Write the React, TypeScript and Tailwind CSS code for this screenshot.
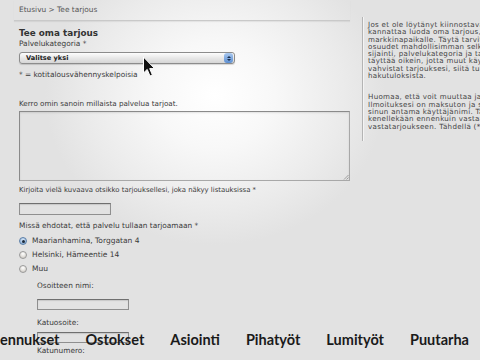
import React from "react";

const sidebarLines = [
  "Jos et ole löytänyt kiinnostavaa palvelua, sinun",
  "kannattaa luoda oma tarjous, jonka voit julkaista",
  "markkinapaikalle. Täytä tarvittavat tiedot ja",
  "osuudet mahdollisimman selkeästi. Tarjouksen",
  "sijainti, palvelukategoria ja tarjouksen otsikko",
  "täyttää oikein, jotta muut käyttäjät löytävät sen. Kun",
  "vahvistat tarjouksesi, siitä tulee näkyvä",
  "hakutuloksista.",
];

const sidebarLines2 = [
  "Huomaa, että voit muuttaa ja poistaa tarjouksesi.",
  "Ilmoituksesi on maksuton ja sen yhteydessä näkyy",
  "sinun antama käyttäjänimi. Tarjouksesi ei näy",
  "kenellekään ennenkuin vastaat",
  "vastatarjoukseen. Tähdellä (*) merkityt kentät",
];

const captions = ["ennukset", "Ostokset", "Asiointi", "Pihatyöt", "Lumityöt", "Puutarha"];

const Radio: React.FC<{ checked?: boolean; label: string }> = ({ checked, label }) => (
  <div className="flex items-center h-[14px]">
    <span
      className={`ml-[19px] w-[8px] h-[8px] rounded-full border flex items-center justify-center ${
        checked
          ? "border-[#5b7fa8] bg-[radial-gradient(circle_at_50%_30%,#d6e6f7,#7ea4cf)]"
          : "border-[#9a9a9a] bg-[radial-gradient(circle_at_50%_30%,#ffffff,#c9c4bc)]"
      }`}
    >
      {checked && <span className="w-[3px] h-[3px] rounded-full bg-[#1d2a3a]" />}
    </span>
    <span className="ml-[5px] text-[7.5px] leading-[8px] text-[#3a3a3a] whitespace-nowrap">{label}</span>
  </div>
);

const TextInput: React.FC<{ className?: string }> = ({ className = "" }) => (
  <div
    className={`border border-[#8f8f8f] border-t-[#6f6f6f] shadow-[inset_0_1px_1px_rgba(0,0,0,0.12)] ${className}`}
  />
);

const Cursor: React.FC = () => (
  <svg
    className="absolute left-[142px] top-[56px]"
    width="14"
    height="22"
    viewBox="0 0 14 22"
  >
    <path
      d="M1.5 1 L1.5 17 L5.2 13.4 L8 20 L10.4 19 L7.7 12.6 L12.6 12.6 Z"
      fill="#111"
      stroke="#fff"
      strokeWidth="1"
      strokeLinejoin="round"
    />
  </svg>
);

export default function App() {
  return (
    <div
      className="relative w-[480px] h-[360px] overflow-hidden text-[#3a3a3a] bg-[#e2e2e2] bg-[radial-gradient(ellipse_170px_150px_at_215px_95px,#ffffff_0%,#f8f8f8_35%,#ebebeb_75%,#e2e2e2_100%)]"
      style={{ fontFamily: '"DejaVu Sans", Verdana, sans-serif' }}
    >
      <div className="flex">
        {/* main form column */}
        <div className="w-[350px] shrink-0">
          <div className="ml-[14px] h-[21px] border-b border-[#c9c9c9] shadow-[0_1px_1px_rgba(0,0,0,0.06)]">
            <div className="pt-[6px] pl-[5px] text-[7.4px] leading-[8px] text-[#555] whitespace-nowrap">
              Etusivu &gt; Tee tarjous
            </div>
          </div>

          <div className="pl-[19px]">
            <div className="mt-[7px] text-[8.8px] leading-[10px] font-bold text-[#333]">
              Tee oma tarjous
            </div>
            <div className="mt-[2px] text-[7.4px] leading-[8px]">Palvelukategoria *</div>

            <div className="mt-[4px] w-[216px] h-[12px] rounded-[3px] border border-[#8c8c8c] bg-[linear-gradient(#fdfdfd,#e6e6e6_55%,#d6d6d6)] flex items-center justify-between shadow-[0_1px_1px_rgba(0,0,0,0.15)]">
              <span className="ml-[6px] text-[6.6px] leading-[8px] font-bold text-[#222]">
                Valitse yksi
              </span>
              <span className="mr-[1px] w-[9px] h-[10px] rounded-[3px] bg-[linear-gradient(#a9c8ef,#5d8fd2)] flex flex-col items-center justify-center gap-[1px]">
                <span className="w-0 h-0 border-l-[2px] border-r-[2px] border-b-[2px] border-l-transparent border-r-transparent border-b-[#1b2f4d]" />
                <span className="w-0 h-0 border-l-[2px] border-r-[2px] border-t-[2px] border-l-transparent border-r-transparent border-t-[#1b2f4d]" />
              </span>
            </div>

            <div className="mt-[7px] text-[7.4px] leading-[8px]">* = kotitalousvähennyskelpoisia</div>

            <div className="mt-[21px] text-[7.2px] leading-[8px] whitespace-nowrap">
              Kerro omin sanoin millaista palvelua tarjoat.
            </div>
            <div className="relative mt-[3px] w-[331px] h-[70px] border border-[#8a8a8a] border-r-[#a8a8a8] border-b-[#a8a8a8] shadow-[inset_0_1px_2px_rgba(0,0,0,0.1)]">
              <svg className="absolute right-[0px] bottom-[0px]" width="6" height="6" viewBox="0 0 6 6">
                <path d="M5.5 1 L1 5.5 M5.5 3.5 L3.5 5.5" stroke="#8a8a8a" strokeWidth="0.8" />
              </svg>
            </div>

            <div className="mt-[5px] text-[6.9px] leading-[8px] whitespace-nowrap">
              Kirjoita vielä kuvaava otsikko tarjouksellesi, joka näkyy listauksissa *
            </div>
            <TextInput className="mt-[9px] w-[92px] h-[12px]" />

            <div className="mt-[7px] text-[7.4px] leading-[8px] whitespace-nowrap">
              Missä ehdotat, että palvelu tullaan tarjoamaan *
            </div>
          </div>

          <div className="mt-[4px]">
            <Radio checked label="Maarianhamina, Torggatan 4" />
            <Radio label="Helsinki, Hämeentie 14" />
            <Radio label="Muu" />
          </div>

          <div className="pl-[37px]">
            <div className="mt-[6px] text-[7.4px] leading-[8px]">Osoitteen nimi:</div>
            <TextInput className="mt-[9px] w-[92px] h-[11px]" />
            <div className="mt-[9px] text-[7.4px] leading-[8px]">Katuosoite:</div>
            <TextInput className="mt-[5px] w-[92px] h-[11px]" />
            <div className="mt-[4px] text-[7.4px] leading-[8px]">Katunumero:</div>
          </div>
        </div>

        {/* info sidebar */}
        <div className="ml-[12px] mt-[17px] h-[124px] shrink-0 border-l border-[#b4b4b4] shadow-[inset_1px_0_0_#f4f4f4] pl-[5px] pt-[4px] text-[7.1px] leading-[7.3px] tracking-[0.3px] text-[#444]">
          {sidebarLines.map((line) => (
            <div key={line} className="whitespace-nowrap">
              {line}
            </div>
          ))}
          <div className="mt-[14px]">
            {sidebarLines2.map((line) => (
              <div key={line} className="whitespace-nowrap">
                {line}
              </div>
            ))}
          </div>
        </div>
      </div>

      <Cursor />

      {/* video caption strip */}
      <div
        className="absolute left-0 top-[331px] flex gap-[26px] text-[14.5px] leading-[18px] font-bold text-[#1a1a1a] whitespace-nowrap"
        style={{ fontFamily: 'Lato, "Open Sans", sans-serif' }}
      >
        {captions.map((c) => (
          <span key={c}>{c}</span>
        ))}
      </div>
    </div>
  );
}
